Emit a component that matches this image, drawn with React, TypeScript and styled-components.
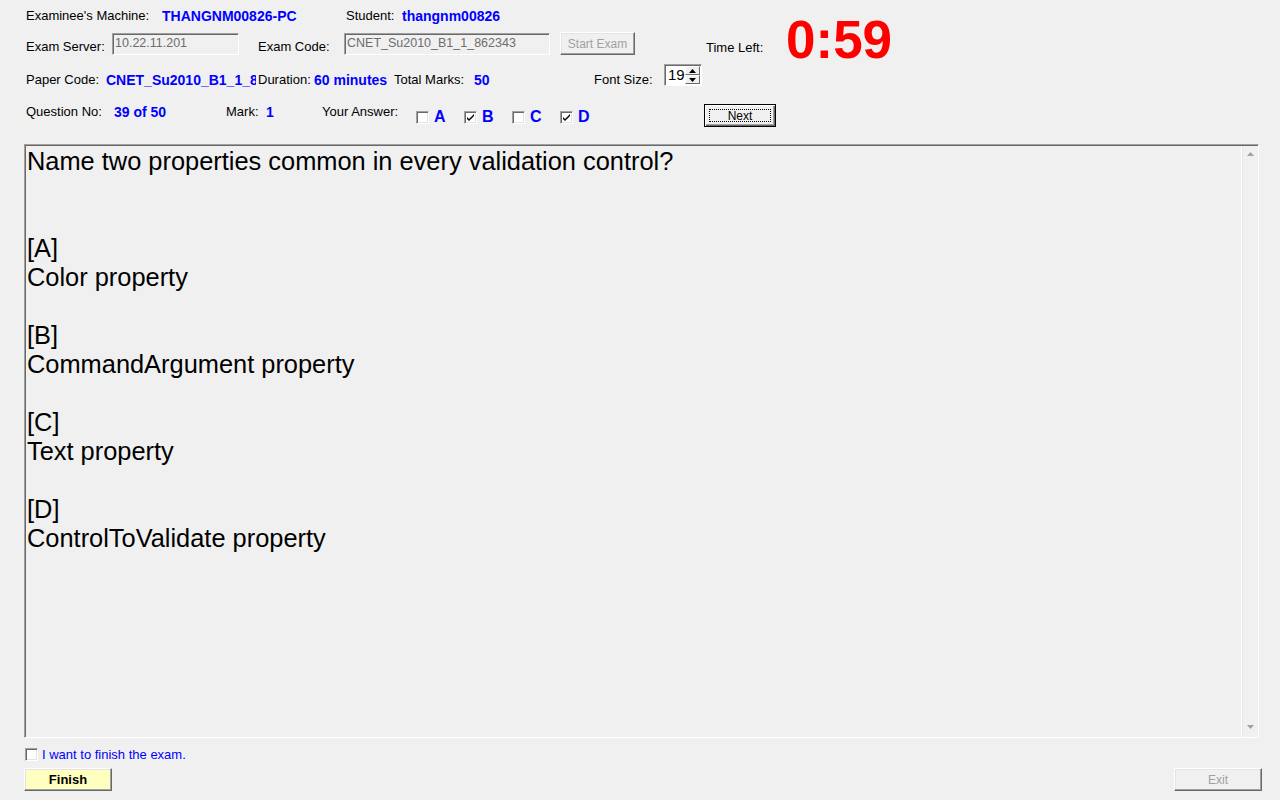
import styled, { createGlobalStyle } from "styled-components";

const GlobalStyle = createGlobalStyle`
  html, body {
    margin: 0;
    padding: 0;
    background: #f0f0f0;
  }
  body {
    font-family: "Liberation Sans", Arial, sans-serif;
    font-size: 13px;
    color: #000;
  }
`;

const Window = styled.div`
  width: 1280px;
  height: 800px;
  background: #f0f0f0;
  display: flex;
  flex-direction: column;
  overflow: hidden;
`;

const TopBlock = styled.div`
  display: flex;
  align-items: flex-start;
  height: 58px;
`;

const TopRows = styled.div`
  width: 786px;
  display: flex;
  flex-direction: column;
`;

const Row = styled.div<{ $h: number }>`
  display: flex;
  align-items: flex-start;
  height: ${(p) => p.$h}px;
  padding-left: 26px;
`;

const Cell = styled.div<{ $w?: number; $dy?: number }>`
  ${(p) => (p.$w ? `width: ${p.$w}px; flex: none;` : "")}
  padding-top: ${(p) => p.$dy ?? 0}px;
  line-height: 14px;
  white-space: nowrap;
  overflow: hidden;
`;

const Label = styled.span`
  font-size: 13px;
  color: #000;
`;

const Value = styled.span`
  font-size: 14px;
  font-weight: bold;
  color: #0000ff;
`;

const Timer = styled.div`
  padding-top: 13px;
  font-size: 53px;
  line-height: 53px;
  font-weight: bold;
  color: #ff0000;
  white-space: nowrap;
`;

const TextBox = styled.div<{ $w: number }>`
  width: ${(p) => p.$w}px;
  height: 22px;
  box-sizing: border-box;
  margin-top: 1px;
  border-top: 1px solid #a0a0a0;
  border-left: 1px solid #a0a0a0;
  border-right: 1px solid #fff;
  border-bottom: 1px solid #fff;
  box-shadow: inset 1px 1px 0 #696969;
  padding: 2px 0 0 2px;
  font-size: 12.5px;
  line-height: 15px;
  color: #6d6d6d;
  flex: none;
  white-space: nowrap;
  overflow: hidden;
`;

const WinButton = styled.button<{ $w: number; $bg?: string; $default?: boolean }>`
  width: ${(p) => p.$w}px;
  height: 23px;
  box-sizing: border-box;
  flex: none;
  margin: 0;
  padding: 0;
  background: ${(p) => p.$bg ?? "#f0f0f0"};
  border-top: 1px solid ${(p) => (p.$default ? "#000" : "#fff")};
  border-left: 1px solid ${(p) => (p.$default ? "#000" : "#fff")};
  border-right: 1px solid ${(p) => (p.$default ? "#000" : "#696969")};
  border-bottom: 1px solid ${(p) => (p.$default ? "#000" : "#696969")};
  box-shadow: ${(p) =>
    p.$default
      ? "inset 1px 1px 0 #fff, inset -1px -1px 0 #696969, inset -2px -2px 0 #a0a0a0"
      : "inset -1px -1px 0 #a0a0a0, inset 1px 1px 0 #e3e3e3"};
  font-family: "Liberation Sans", Arial, sans-serif;
  font-size: 12px;
  color: #000;
  display: flex;
  align-items: center;
  justify-content: center;
  cursor: default;

  &:disabled {
    color: #a0a0a0;
  }
`;

const FocusRect = styled.span`
  width: calc(100% - 8px);
  height: calc(100% - 8px);
  border: 1px dotted #000;
  box-sizing: border-box;
  display: flex;
  align-items: center;
  justify-content: center;
  line-height: 12px;
`;

const BoldCaption = styled.span`
  font-size: 13px;
  font-weight: bold;
  color: #000;
`;

const Spinner = styled.div`
  width: 38px;
  height: 22px;
  box-sizing: border-box;
  margin-top: 6px;
  flex: none;
  display: flex;
  background: #fff;
  border-top: 1px solid #a0a0a0;
  border-left: 1px solid #a0a0a0;
  border-right: 1px solid #fff;
  border-bottom: 1px solid #fff;
  box-shadow: inset 1px 1px 0 #696969;
`;

const SpinValue = styled.div`
  flex: 1;
  font-size: 15px;
  line-height: 18px;
  padding: 1px 0 0 3px;
`;

const SpinButtons = styled.div`
  width: 16px;
  display: flex;
  flex-direction: column;
  margin: 1px 1px 1px 0;
`;

const SpinButton = styled.div`
  flex: 1;
  background: #f0f0f0;
  border-top: 1px solid #fff;
  border-left: 1px solid #fff;
  border-right: 1px solid #696969;
  border-bottom: 1px solid #696969;
  display: flex;
  align-items: center;
  justify-content: center;
`;

const Check = styled.span`
  width: 13px;
  height: 13px;
  box-sizing: border-box;
  flex: none;
  background: #fff;
  border-top: 1px solid #a0a0a0;
  border-left: 1px solid #a0a0a0;
  border-right: 1px solid #fff;
  border-bottom: 1px solid #fff;
  box-shadow: inset 1px 1px 0 #696969, inset -1px -1px 0 #e3e3e3;
  display: flex;
  align-items: center;
  justify-content: center;
`;

const Option = styled.div`
  width: 48px;
  flex: none;
  display: flex;
  align-items: center;
  gap: 5px;
  margin-top: 13px;
`;

const OptionLetter = styled.span`
  font-size: 16px;
  font-weight: bold;
  color: #0000ff;
  line-height: 16px;
`;

const Gap = styled.div<{ $w: number }>`
  width: ${(p) => p.$w}px;
  flex: none;
`;

const QuestionPanel = styled.div`
  margin: 14px 0 0 24px;
  width: 1235px;
  height: 594px;
  box-sizing: border-box;
  display: flex;
  border-top: 1px solid #a0a0a0;
  border-left: 1px solid #a0a0a0;
  border-right: 1px solid #fff;
  border-bottom: 1px solid #fff;
  box-shadow: inset 1px 1px 0 #696969;
`;

const QuestionText = styled.div`
  flex: 1;
  padding: 2px 0 0 2px;
  font-size: 25.4px;
  line-height: 29px;
  color: #000;
  white-space: pre-line;
`;

const ScrollTrack = styled.div`
  width: 16px;
  margin: 1px 0 0 0;
  background: #f0f0f0;
  border-left: 1px solid #fff;
  box-shadow: inset 1px 0 0 #e8e8e8;
  display: flex;
  flex-direction: column;
  justify-content: space-between;
  align-items: center;
  padding: 6px 0 8px;
`;

const Footer = styled.div`
  display: flex;
  flex-direction: column;
  padding-left: 24px;
  margin-top: 10px;
`;

const FinishRow = styled.div`
  display: flex;
  align-items: center;
  gap: 4px;
  padding-left: 1px;
  height: 13px;
`;

const FinishLabel = styled.span`
  color: #0000ff;
  font-size: 13px;
`;

const ButtonRow = styled.div`
  display: flex;
  justify-content: space-between;
  width: 1238px;
  margin-top: 7px;
`;

const CheckMark = () => (
  <svg width="9" height="9" viewBox="0 0 9 9">
    <path d="M1 4 L3 6 L8 1 L8 3 L3 8 L1 6 Z" fill="#000" />
  </svg>
);

const Arrow = ({ up, color = "#000" }: { up: boolean; color?: string }) => (
  <svg width="7" height="4" viewBox="0 0 7 4">
    <path d={up ? "M3.5 0 L7 4 L0 4 Z" : "M0 0 L7 0 L3.5 4 Z"} fill={color} />
  </svg>
);

const options = [
  { key: "A", checked: false },
  { key: "B", checked: true },
  { key: "C", checked: false },
  { key: "D", checked: true },
];

const question = `Name two properties common in every validation control?


[A]
Color property

[B]
CommandArgument property

[C]
Text property

[D]
ControlToValidate property`;

export default function App() {
  return (
    <Window>
      <GlobalStyle />
      <TopBlock>
        <TopRows>
          <Row $h={32}>
            <Cell $w={136} $dy={9}>
              <Label>Examinee's Machine:</Label>
            </Cell>
            <Cell $w={184} $dy={9}>
              <Value>THANGNM00826-PC</Value>
            </Cell>
            <Cell $w={56} $dy={9}>
              <Label>Student:</Label>
            </Cell>
            <Cell $dy={9}>
              <Value>thangnm00826</Value>
            </Cell>
          </Row>
          <Row $h={26}>
            <Cell $w={86} $dy={8}>
              <Label>Exam Server:</Label>
            </Cell>
            <TextBox $w={127}>10.22.11.201</TextBox>
            <Gap $w={19} />
            <Cell $w={86} $dy={8}>
              <Label>Exam Code:</Label>
            </Cell>
            <TextBox $w={206}>CNET_Su2010_B1_1_862343</TextBox>
            <Gap $w={10} />
            <WinButton $w={75} disabled>
              Start Exam
            </WinButton>
            <Gap $w={71} />
            <Cell $dy={9}>
              <Label>Time Left:</Label>
            </Cell>
          </Row>
        </TopRows>
        <Timer>0:59</Timer>
      </TopBlock>
      <Row $h={38}>
        <Cell $w={80} $dy={15}>
          <Label>Paper Code:</Label>
        </Cell>
        <Cell $w={150} $dy={15}>
          <Value>CNET_Su2010_B1_1_862343</Value>
        </Cell>
        <Gap $w={2} />
        <Cell $w={56} $dy={15}>
          <Label>Duration:</Label>
        </Cell>
        <Cell $w={80} $dy={15}>
          <Value>60 minutes</Value>
        </Cell>
        <Cell $w={80} $dy={15}>
          <Label>Total Marks:</Label>
        </Cell>
        <Cell $w={120} $dy={15}>
          <Value>50</Value>
        </Cell>
        <Cell $w={70} $dy={15}>
          <Label>Font Size:</Label>
        </Cell>
        <Spinner>
          <SpinValue>19</SpinValue>
          <SpinButtons>
            <SpinButton>
              <Arrow up />
            </SpinButton>
            <SpinButton>
              <Arrow up={false} />
            </SpinButton>
          </SpinButtons>
        </Spinner>
      </Row>
      <Row $h={34}>
        <Cell $w={88} $dy={9}>
          <Label>Question No:</Label>
        </Cell>
        <Cell $w={112} $dy={9}>
          <Value>39 of 50</Value>
        </Cell>
        <Cell $w={40} $dy={9}>
          <Label>Mark:</Label>
        </Cell>
        <Cell $w={56} $dy={9}>
          <Value>1</Value>
        </Cell>
        <Cell $w={94} $dy={9}>
          <Label>Your Answer:</Label>
        </Cell>
        {options.map((o) => (
          <Option key={o.key}>
            <Check>{o.checked && <CheckMark />}</Check>
            <OptionLetter>{o.key}</OptionLetter>
          </Option>
        ))}
        <Gap $w={96} />
        <WinButton $w={72} $default style={{ marginTop: 8 }}>
          <FocusRect>Next</FocusRect>
        </WinButton>
      </Row>
      <QuestionPanel>
        <QuestionText>{question}</QuestionText>
        <ScrollTrack>
          <Arrow up color="#a0a0a0" />
          <Arrow up={false} color="#a0a0a0" />
        </ScrollTrack>
      </QuestionPanel>
      <Footer>
        <FinishRow>
          <Check />
          <FinishLabel>I want to finish the exam.</FinishLabel>
        </FinishRow>
        <ButtonRow>
          <WinButton $w={88} $bg="#ffffc0">
            <BoldCaption>Finish</BoldCaption>
          </WinButton>
          <WinButton $w={88} disabled>
            Exit
          </WinButton>
        </ButtonRow>
      </Footer>
    </Window>
  );
}
